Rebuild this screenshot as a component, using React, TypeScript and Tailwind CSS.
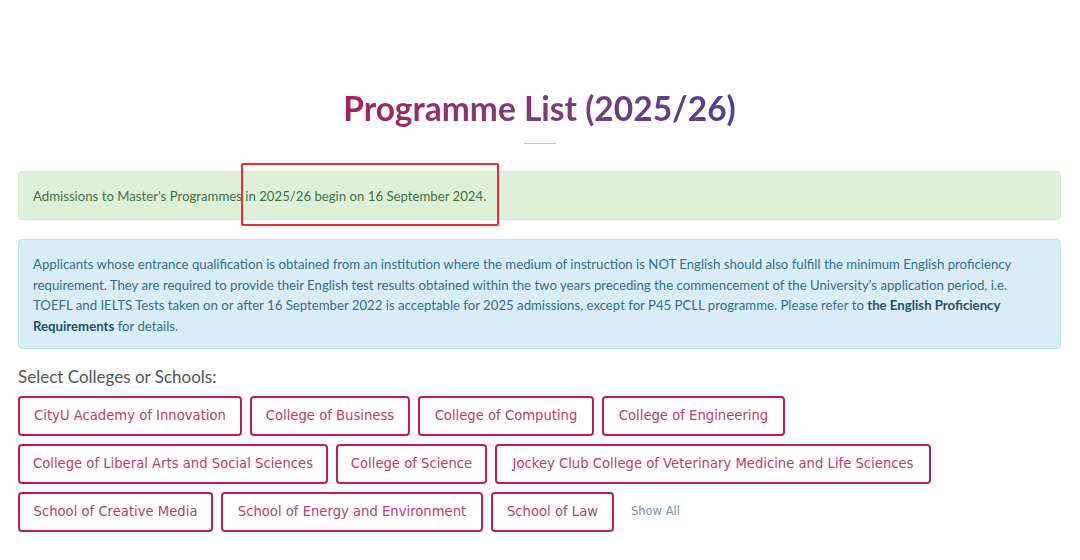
import React from "react";

type School = {
  name: string;
  width: string;
};

const SCHOOLS: School[] = [
  { name: "CityU Academy of Innovation", width: "w-[224px]" },
  { name: "College of Business", width: "w-[160px]" },
  { name: "College of Computing", width: "w-[176px]" },
  { name: "College of Engineering", width: "w-[183px]" },
  { name: "College of Liberal Arts and Social Sciences", width: "w-[310px]" },
  { name: "College of Science", width: "w-[151px]" },
  { name: "Jockey Club College of Veterinary Medicine and Life Sciences", width: "w-[436px]" },
  { name: "School of Creative Media", width: "w-[195px]" },
  { name: "School of Energy and Environment", width: "w-[262px]" },
  { name: "School of Law", width: "w-[123px]" },
];

export default function App() {
  return (
    <main className="min-h-screen bg-white font-['Lato',sans-serif]">
      <div className="px-[18px] pt-[88px] pr-[19px]">
        <div className="flex flex-col items-center">
          <h1 className="inline-block bg-gradient-to-r from-[#a81f5d] to-[#4f4190] bg-clip-text text-[33.5px] font-bold leading-[40px] text-transparent">
            Programme List (2025/26)
          </h1>
          <div className="mt-[15px] h-px w-[32px] bg-[#c5c5d0]" />
        </div>

        <div className="relative mt-[27px] rounded-[4px] border border-[#d6e9c6] bg-[#dff0d8] px-[14px] pb-[12px] pt-[14px] text-[13.2px] leading-[21px] text-[#3c763d]">
          Admissions to Master's Programmes in 2025/26 begin on 16 September 2024.
          <div className="pointer-events-none absolute left-[222px] top-[-9px] h-[63px] w-[258px] rounded-[2px] border-2 border-[#f52a2a]" />
        </div>

        <div className="mt-[19px] rounded-[4px] border border-[#bce8f1] bg-[#d9edf7] px-[14px] pb-[12px] pt-[14px] text-[13.2px] leading-[20.5px] text-[#31708f]">
          Applicants whose entrance qualification is obtained from an institution where the medium of instruction is NOT
          English should also fulfill the minimum English proficiency requirement. They are required to provide their
          English test results obtained within the two years preceding the commencement of the University's application
          period, i.e. TOEFL and IELTS Tests taken on or after 16 September 2022 is acceptable for 2025 admissions, except
          for P45 PCLL programme. Please refer to <b className="text-[#245269]">the English Proficiency Requirements</b> for
          details.
        </div>

        <p className="mt-[18px] text-[17px] leading-[20px] text-[#555]">Select Colleges or Schools:</p>

        <div className="mt-[9px] flex flex-wrap items-center gap-[8px] font-['DejaVu_Sans',sans-serif]">
          {SCHOOLS.map((s) => (
            <button
              key={s.name}
              className={`${s.width} h-[40px] whitespace-nowrap rounded-[4px] border-2 border-[#c8195f] bg-white text-center text-[13.2px] text-[#c23a70]`}
            >
              {s.name}
            </button>
          ))}
          <a href="#" className="ml-[9px] text-[11.5px] text-[#6f94c4]">
            Show All
          </a>
        </div>
      </div>
    </main>
  );
}
